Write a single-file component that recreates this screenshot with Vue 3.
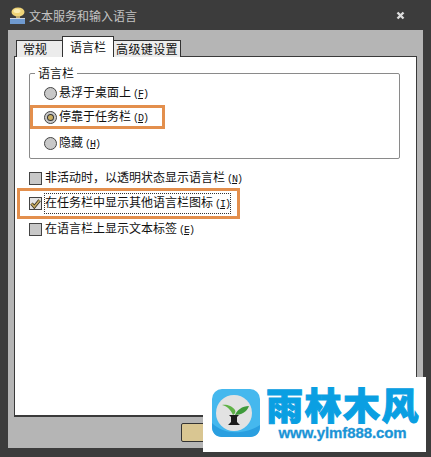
<script setup>
const radios = [
  { text: '悬浮于桌面上', key: 'F', mark: false, on: false },
  { text: '停靠于任务栏', key: 'D', mark: true, on: true },
  { text: '隐藏', key: 'H', mark: false, on: false }
]
const checks = [
  { text: '非活动时，以透明状态显示语言栏', key: 'N', mark: false, on: false },
  { text: '在任务栏中显示其他语言栏图标', key: 'I', mark: true, on: true },
  { text: '在语言栏上显示文本标签', key: 'E', mark: false, on: false }
]
</script>

<template>
  <div class="win">
    <div class="titlebar">
      <svg class="appicon" width="20" height="20" viewBox="0 0 20 20">
        <ellipse cx="11" cy="7" rx="6.500" ry="4.500" fill="#efd478" />
        <ellipse cx="10" cy="6" rx="3.500" ry="2" fill="#fbeeb4" />
        <rect x="9" y="11" width="4" height="3" fill="#c2ad72" />
        <rect x="3" y="14" width="15" height="5" fill="#6f9ad0" />
        <rect x="3" y="13" width="15" height="1" fill="#cfd6e2" />
      </svg>
      <span class="title">文本服务和输入语言</span>
      <svg class="close" width="9" height="9" viewBox="0 0 9 9">
        <path d="M1.500 1.500 7.500 7.500M7.500 1.500 1.500 7.500" stroke="#dcdcdc" stroke-width="2.400" />
      </svg>
    </div>

    <div class="dialog">
      <div class="tabs">
        <div class="tab first">常规</div>
        <div class="tab active">语言栏</div>
        <div class="tab third">高级键设置</div>
      </div>

      <div class="page">
        <fieldset class="group">
          <legend>语言栏</legend>
          <div
            v-for="r in radios"
            :key="r.key"
            class="row radio-row"
            :class="{ mark: r.mark }"
          >
            <span class="radio" :class="{ on: r.on }"></span>
            <span class="label">{{ r.text }}<span class="hot">(<u>{{ r.key }}</u>)</span></span>
          </div>
        </fieldset>

        <div class="checks">
          <div
            v-for="c in checks"
            :key="c.key"
            class="row check-row"
            :class="{ mark: c.mark }"
          >
            <span class="check" :class="{ on: c.on }">
              <svg v-if="c.on" width="11" height="11" viewBox="0 0 11 11">
                <path d="M1.500 5.500 4.300 8.800 9.600 2.200" fill="none" stroke="#3a3320" stroke-width="3.200" />
                <path d="M1.500 5.500 4.300 8.800 9.600 2.200" fill="none" stroke="#c9ae62" stroke-width="1.500" />
              </svg>
            </span>
            <span class="label" :class="{ focus: c.on }">{{ c.text }}<span class="hot">(<u>{{ c.key }}</u>)</span></span>
          </div>
        </div>
      </div>

      <button class="ok">确定</button>
    </div>

    <div class="logo">
      <svg class="logomark" width="48" height="48" viewBox="0 0 48 48">
        <rect width="48" height="48" rx="10" fill="#45b8ee" />
        <path d="M0 34C12 46 32 46 48 36V38C48 44 44 48 38 48H10C4 48 0 44 0 38Z" fill="#2a9fe0" />
        <circle cx="22" cy="24" r="18" fill="#e2e2e2" />
        <path d="M21 26C19 21 15 17 10 16 13 15 20 16 23 21 24 23 23 25 21 26Z" fill="#5fb247" />
        <path d="M23 26C25 21 30 17 37 17 35 23 29 26 23 26Z" fill="#3e9a3a" />
        <path d="M17 26H27L25 28V33L28 36H16L19 33V28Z" fill="#1c1c1c" />
      </svg>
      <div class="brand">
        <div class="brandname">雨林木风</div>
        <div class="brandurl">www.ylmf888.com</div>
      </div>
    </div>
  </div>
</template>

<style scoped>
.win {
  position: relative;
  width: 431px;
  height: 457px;
  background: #3c3c3c;
  overflow: hidden;
  font-family: "Noto Sans CJK SC", "Liberation Sans", sans-serif;
  font-size: 12px;
  color: #111;
}
.titlebar {
  height: 30px;
  display: flex;
  align-items: center;
  padding: 0 26px 0 7px;
}
.appicon {
  margin-right: 2px;
}
.title {
  color: #c4c4c4;
  font-size: 12px;
  flex: 1;
}
.dialog {
  margin: 0 8px;
  height: 418px;
  background: #b5b5b5;
  padding: 6px 6px 0;
  box-sizing: border-box;
}
.tabs {
  display: flex;
  align-items: flex-end;
  height: 21px;
  padding-left: 2px;
  position: relative;
  z-index: 1;
  margin-bottom: -1px;
}
.tab {
  box-sizing: border-box;
  border: 1px solid #333;
  border-bottom: none;
  background: #ececec;
  text-align: center;
  height: 17px;
  line-height: 16px;
}
.first {
  width: 46px;
  border-right: none;
  text-align: left;
  padding-left: 6px;
}
.active {
  width: 52px;
  height: 21px;
  background: #fff;
  line-height: 19px;
}
.third {
  width: 67px;
  border-left: none;
  letter-spacing: 0.400px;
}
.page {
  box-sizing: border-box;
  width: 403px;
  height: 361px;
  background: #fff;
  border: 1px solid #3a3a3a;
  border-bottom-width: 2px;
  padding: 0 16px 0 14px;
}
.group {
  margin: 8px 0 0;
  padding: 0 0 3px;
  border: 1px solid #8a8a8a;
  border-radius: 2px;
  min-width: 0;
}
legend {
  margin-left: 5px;
  padding: 0 3px;
  height: 16px;
  line-height: 16px;
}
.row {
  display: flex;
  align-items: center;
  box-sizing: border-box;
}
.radio-row {
  height: 24px;
  padding-left: 14px;
}
.radio-row:last-child {
  margin-top: 2px;
}
.radio-row.mark {
  width: 135px;
  padding-left: 11px;
  border: 3px solid #e38f4d;
}
.radio {
  box-sizing: border-box;
  width: 13px;
  height: 13px;
  border-radius: 50%;
  border: 1px solid #444;
  background: #c8c8c8;
  margin-right: 2px;
  display: flex;
  align-items: center;
  justify-content: center;
}
.radio.on::after {
  content: "";
  width: 5px;
  height: 5px;
  border-radius: 50%;
  background: #c9ae62;
  box-shadow: 0 0 0 1px #333;
}
.checks {
  margin-top: 9px;
}
.check-row {
  height: 20px;
}
.check-row.mark {
  height: 31px;
  width: 223px;
  margin-left: -12px;
  padding-left: 9px;
  border: 3px solid #e38f4d;
}
.check {
  box-sizing: border-box;
  width: 13px;
  height: 13px;
  border: 1px solid #444;
  background: #c8c8c8;
  margin-right: 3px;
  display: flex;
  align-items: center;
  justify-content: center;
}
.check.on {
  background: #e4e4e4;
}
.label {
  white-space: nowrap;
  line-height: 16px;
}
.label.focus {
  outline: 1px dotted #333;
  outline-offset: 0;
}
.hot {
  font-family: "Liberation Mono", monospace;
  font-size: 10px;
  letter-spacing: -1px;
  margin-left: 2px;
}
.ok {
  display: block;
  box-sizing: border-box;
  margin: 6px 0 0 167px;
  width: 74px;
  height: 19px;
  padding: 0;
  border: 1px solid #333;
  border-radius: 2px;
  background: #d9c692;
  font: inherit;
  color: #111;
}
.logo {
  position: absolute;
  left: 203px;
  top: 377px;
  width: 223px;
  height: 75px;
  background: #fff;
  display: flex;
  align-items: flex-start;
  box-sizing: border-box;
  padding: 12px 0 0 9px;
}
.logomark {
  flex: none;
}
.brand {
  margin-left: 6px;
  margin-top: -4px;
  width: 153px;
}
.brandname {
  font-size: 37px;
  line-height: 38px;
  font-weight: 900;
  color: #0a9fe2;
  white-space: nowrap;
  letter-spacing: 1.500px;
  -webkit-text-stroke: 1px #0a9fe2;
}
.brandurl {
  margin-top: 2px;
  font-family: "Liberation Sans", sans-serif;
  font-size: 15px;
  line-height: 15px;
  font-weight: 700;
  color: #1b94d6;
  text-align: center;
  white-space: nowrap;
  letter-spacing: -0.100px;
  -webkit-text-stroke: 0.300px #1b94d6;
}
</style>

<style>
html, body {
  margin: 0;
  background: #3c3c3c;
}
</style>
